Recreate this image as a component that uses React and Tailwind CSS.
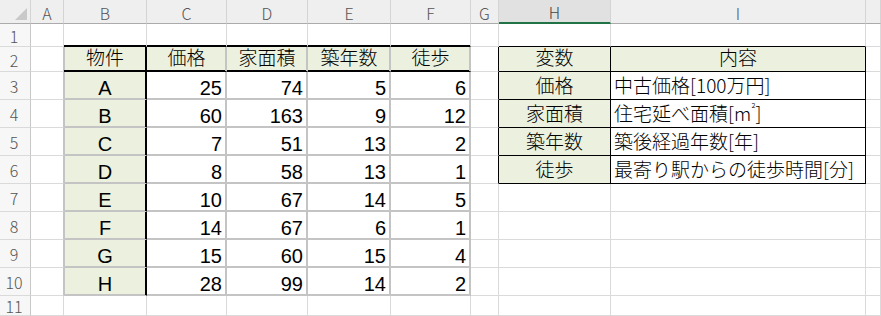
import React from "react";

const JP = "font-['Noto_Sans_CJK_JP','Noto_Sans_CJK_SC',sans-serif]";
const AR = "font-['Liberation_Sans',Arial,sans-serif]";

const COLS = ["A", "B", "C", "D", "E", "F", "G", "H", "I", ""];

const table1Head = ["物件", "価格", "家面積", "築年数", "徒歩"];
const table1Rows = [
  ["A", 25, 74, 5, 6],
  ["B", 60, 163, 9, 12],
  ["C", 7, 51, 13, 2],
  ["D", 8, 58, 13, 1],
  ["E", 10, 67, 14, 5],
  ["F", 14, 67, 6, 1],
  ["G", 15, 60, 15, 4],
  ["H", 28, 99, 14, 2],
];

const areaLabel = (
  <>
    住宅延べ面積[m<span className="relative top-[-5px] text-[11px]">²</span>]
  </>
);

const table2 = [
  ["変数", "内容"],
  ["価格", "中古価格[100万円]"],
  ["家面積", areaLabel],
  ["築年数", "築後経過年数[年]"],
  ["徒歩", "最寄り駅からの徒歩時間[分]"],
];

function cellText(r, c) {
  if (r >= 2 && r <= 10 && c >= 2 && c <= 6) {
    if (r === 2) return table1Head[c - 2];
    return String(table1Rows[r - 3][c - 2]);
  }
  if (r >= 2 && r <= 6 && c >= 8 && c <= 9) return table2[r - 2][c - 8];
  return "";
}

function cellBox(r, c) {
  const t1 = r >= 2 && r <= 10 && c >= 2 && c <= 6;
  const t2 = r >= 2 && r <= 6 && c >= 8 && c <= 9;
  if (t1) {
    if (r === 2 && c === 2)
      return "bg-[#ebf1de] border-r border-b border-black shadow-[inset_-1px_0_0_#000,inset_0_-1px_0_#000,inset_1px_0_0_#c4c4c4]";
    if (r === 2)
      return "bg-[#ebf1de] border-r border-b border-r-[#c4c4c4] border-b-black shadow-[inset_-1px_0_0_#c4c4c4,inset_0_-1px_0_#000]";
    if (c === 2)
      return "bg-[#ebf1de] border-r border-b border-r-black border-b-[#c4c4c4] shadow-[inset_-1px_0_0_#000,inset_0_-1px_0_#c4c4c4,inset_1px_0_0_#c4c4c4]";
    return "bg-white border-r border-b border-[#c4c4c4] shadow-[inset_-1px_0_0_#c4c4c4,inset_0_-1px_0_#c4c4c4]";
  }
  if (t2) {
    if (c === 8 || r === 2) return "bg-[#ebf1de] border-r border-b border-black";
    return "bg-white border-r border-b border-black";
  }
  if (r === 1 && c >= 2 && c <= 6)
    return "bg-white border-r border-b border-r-[#dadada] border-b-black shadow-[inset_0_-1px_0_#000]";
  if (r === 1 && (c === 8 || c === 9))
    return "bg-white border-r border-b border-r-[#dadada] border-b-black";
  if (c === 1 && r >= 2 && r <= 10)
    return "bg-white border-r border-b border-r-[#c4c4c4] border-b-[#dadada]";
  if (c === 7 && r >= 2 && r <= 6)
    return "bg-white border-r border-b border-r-black border-b-[#dadada]";
  return "bg-white border-r border-b border-[#dadada]";
}

function cellAlign(r, c) {
  const t1 = r >= 2 && r <= 10 && c >= 2 && c <= 6;
  const t2 = r >= 2 && r <= 6 && c >= 8 && c <= 9;
  if (t1 && r === 2) return `${JP} font-light text-[19px] leading-[20px] justify-center pb-[4px]`;
  if (t1 && c === 2) return `${AR} text-[20px] leading-[20px] justify-center pb-[1px]`;
  if (t1) return `${AR} text-[20px] leading-[20px] justify-end pr-[4px] pb-[1px]`;
  if (t2 && (c === 8 || r === 2)) return `${JP} font-light text-[19px] leading-[20px] justify-center pb-[4px]`;
  if (t2) return `${JP} font-light text-[19px] leading-[20px] justify-start pl-[3px] pb-[4px]`;
  return "";
}

function Corner() {
  return (
    <div className="flex items-end justify-end border-r border-b border-r-[#d4d4d4] border-b-[#ababab] bg-[#efefef] pr-[3px] pb-[3px]">
      <svg width="12" height="12" viewBox="0 0 12 12">
        <polygon points="12,0 12,12 0,12" fill="#c9c9c9" />
      </svg>
    </div>
  );
}

function ColHeader({ label, selected }) {
  return (
    <div
      className={
        selected
          ? `flex items-center justify-center border-r border-b-2 border-r-[#d4d4d4] border-b-[#217346] bg-[#e1e1e1] pt-[2px] text-[16px] font-light text-[#444] ${JP}`
          : `flex items-center justify-center border-r border-b border-r-[#d4d4d4] border-b-[#ababab] bg-[#efefef] pt-[2px] text-[16px] font-light text-[#555] ${JP}`
      }
    >
      {label}
    </div>
  );
}

function RowHeader({ n }) {
  return (
    <div
      className={`flex items-center justify-center border-r border-b border-r-[#c8c8c8] border-b-[#dadada] bg-[#f7f7f7] pt-[1px] pr-[2px] text-[16px] leading-[18px] font-light text-[#555] ${JP}`}
    >
      {n}
    </div>
  );
}

export default function App() {
  const rows = [1, 2, 3, 4, 5, 6, 7, 8, 9, 10, 11];
  return (
    <div className="h-[316px] w-[881px] overflow-hidden bg-white">
      <div className="grid grid-cols-[31px_33px_83px_80px_81px_83px_80px_28px_112px_255px_15px] grid-rows-[24px_23px_25px_repeat(8,28px)_20px] text-black">
        <Corner />
        {COLS.map((label, i) => (
          <ColHeader key={`h${i}`} label={label} selected={label === "H"} />
        ))}
        {rows.map((r) => (
          <React.Fragment key={`r${r}`}>
            <RowHeader n={r} />
            {COLS.map((_, i) => {
              const c = i + 1;
              return (
                <div
                  key={`c${r}-${c}`}
                  className={`flex items-end whitespace-nowrap ${cellBox(r, c)} ${cellAlign(r, c)}`}
                >
                  {cellText(r, c)}
                </div>
              );
            })}
          </React.Fragment>
        ))}
      </div>
    </div>
  );
}
